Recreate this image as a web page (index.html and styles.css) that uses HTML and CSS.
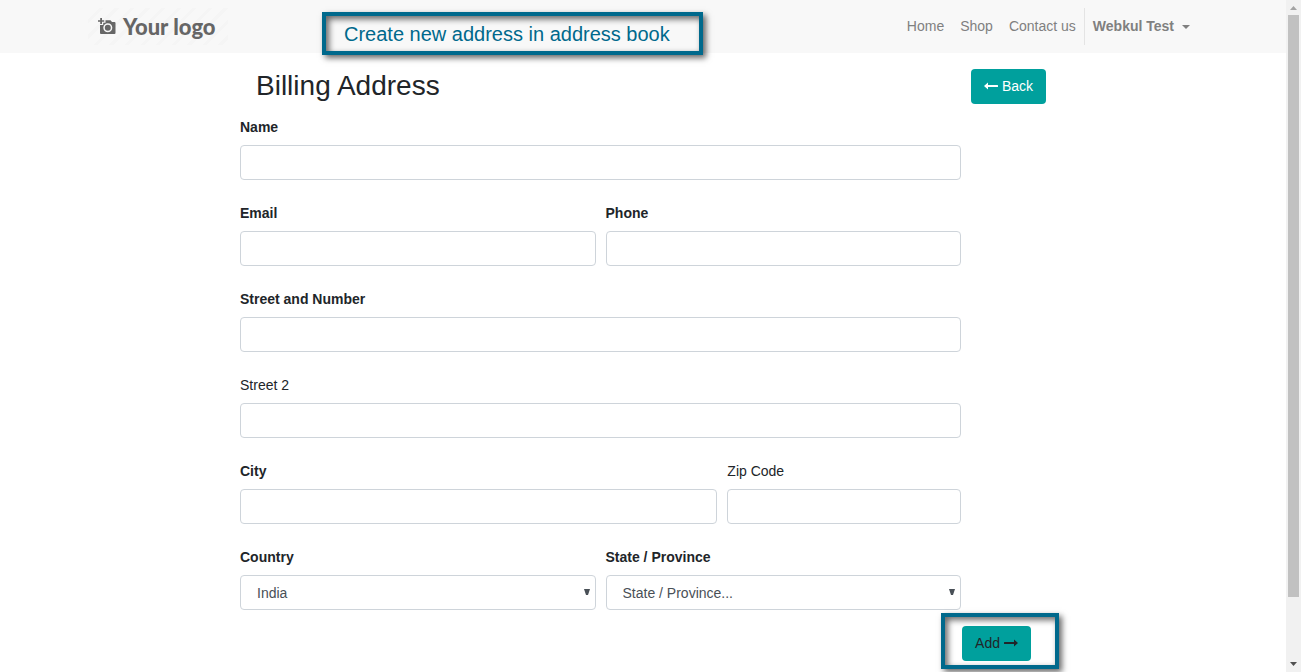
FILE: index.html
```html
<!DOCTYPE html>
<html lang="en">
<head>
<meta charset="utf-8">
<meta name="viewport" content="width=device-width, initial-scale=1">
<title>Billing Address</title>
<link rel="stylesheet" href="styles.css">
</head>
<body>
<div class="window">
  <div class="page">
    <header class="topbar">
      <div class="container">
        <a class="logo" href="#">
          <svg class="logo-icon" viewBox="0 0 18 18" aria-hidden="true">
            <path fill="#666" d="M2.200 0h1.800v2.200h2.200v1.600H4v2.200H2.200V3.800H0V2.200h2.200z"/>
            <path fill="#666" fill-rule="evenodd" d="M7.500 2.200h5l1.500 1.800h2.500q1 0 1 1V15q0 1-1 1H3q-1 0-1-1V7h3.200V4.800h2.300zM9.800 5.300a4.500 4.500 0 1 0 0 9a4.500 4.500 0 0 0 0-9zM9.800 6.800a3 3 0 1 1 0 6a3 3 0 0 1 0-6z"/>
            <circle fill="#666" cx="9.800" cy="9.800" r="2"/>
          </svg>
          <span>Your logo</span>
        </a>
        <nav class="nav">
          <a href="#">Home</a>
          <a href="#">Shop</a>
          <a href="#">Contact us</a>
          <button class="user" type="button">Webkul Test<span class="caret"></span></button>
        </nav>
      </div>
      <div class="callout callout-title">Create new address in address book</div>
    </header>
    <main class="content">
      <div class="heading">
        <h1>Billing Address</h1>
        <a class="btn btn-back" href="#">
          <svg class="arrow" viewBox="0 0 14 9" aria-hidden="true"><path fill="currentColor" d="M0 4 4 .5V3h9.500q.5 0 .5.500v1q0 .5-.5.500H4v2.500z"/></svg>
          Back
        </a>
      </div>
      <form class="form">
        <div class="field span-12"><label class="required" for="name">Name</label><input id="name" type="text"></div>
        <div class="field span-6"><label class="required" for="email">Email</label><input id="email" type="email"></div>
        <div class="field span-6"><label class="required" for="phone">Phone</label><input id="phone" type="tel"></div>
        <div class="field span-12"><label class="required" for="street">Street and Number</label><input id="street" type="text"></div>
        <div class="field span-12"><label for="street2">Street 2</label><input id="street2" type="text"></div>
        <div class="field span-8"><label class="required" for="city">City</label><input id="city" type="text"></div>
        <div class="field span-4"><label for="zip">Zip Code</label><input id="zip" type="text"></div>
        <div class="field span-6">
          <label class="required" for="country">Country</label>
          <div class="select">
            <select id="country"><option>India</option></select>
            <svg class="select-arrow" viewBox="0 0 6 6" aria-hidden="true"><path fill="#495057" d="M0 0h6L4 6H2z"/></svg>
          </div>
        </div>
        <div class="field span-6">
          <label class="required" for="state">State / Province</label>
          <div class="select">
            <select id="state"><option>State / Province...</option></select>
            <svg class="select-arrow" viewBox="0 0 6 6" aria-hidden="true"><path fill="#495057" d="M0 0h6L4 6H2z"/></svg>
          </div>
        </div>
      </form>
      <div class="actions">
        <div class="add-wrap">
          <button class="btn btn-add" type="button">
            Add
            <svg class="arrow" viewBox="0 0 14 9" aria-hidden="true"><path fill="currentColor" d="M14 4 10 .5V3H.5q-.5 0-.5.500v1q0 .5.500.500H10v2.500z"/></svg>
          </button>
          <div class="callout callout-add"></div>
        </div>
      </div>
    </main>
  </div>
  <div class="scrollbar" aria-hidden="true">
    <svg class="scroll-arrow" viewBox="0 0 15 15"><path fill="#a3a3a3" d="M4 10h7L7.500 6z"/></svg>
    <div class="track"><div class="thumb"></div></div>
    <svg class="scroll-arrow" viewBox="0 0 15 15"><path fill="#505050" d="M4 5h7L7.500 9z"/></svg>
  </div>
</div>
</body>
</html>
```
FILE: styles.css
```css
* {
  box-sizing: border-box;
}

body {
  margin: 0;
  background: #fff;
  color: #212529;
  font: 14px/21px "Liberation Sans", Arial, sans-serif;
}

a {
  color: inherit;
  text-decoration: none;
}

.window {
  display: grid;
  grid-template-columns: 1fr 15px;
  height: 100vh;
  overflow: hidden;
}

.page {
  min-width: 0;
}

.topbar {
  position: relative;
  padding: 8px 0;
  background: #f8f8f8;
}

.container {
  display: flex;
  align-items: center;
  justify-content: space-between;
  max-width: 1140px;
  margin: 0 auto;
  padding: 0 15px;
}

.logo {
  display: flex;
  align-items: center;
  gap: 7px;
  height: 37px;
  padding: 0 12px 0 10px;
  background: repeating-linear-gradient(135deg, #f8f8f8 0 8px, #f5f5f5 8px 11px);
  color: #666;
  font: 900 22px/35px Lato, sans-serif;
}

.logo-icon {
  width: 18px;
  height: 18px;
}

.nav {
  display: flex;
  align-items: center;
  color: #808080;
}

.nav a {
  padding: 8px;
}

.user {
  display: flex;
  align-items: center;
  gap: 8px;
  padding: 8px;
  border: 0;
  border-left: 1px solid #e4e4e4;
  background: none;
  color: inherit;
  font: inherit;
  font-weight: bold;
}

.caret {
  border: 4px solid transparent;
  border-top-color: currentColor;
  border-bottom: 0;
}

.content {
  max-width: 806px;
  margin: 0 auto;
  padding-top: 16px;
}

.heading {
  display: flex;
  align-items: flex-start;
  justify-content: space-between;
  margin-bottom: 6px;
  padding-left: 16px;
}

h1 {
  margin: 0;
  font-size: 28px;
  font-weight: normal;
  line-height: 34px;
}

.btn {
  display: flex;
  align-items: center;
  gap: 4px;
  height: 35px;
  padding: 0 13px;
  border: 0;
  border-radius: 4px;
  background: #00a09d;
  font: inherit;
}

.btn-back {
  color: #fff;
}

.btn-add {
  color: #212529;
}

.arrow {
  width: 14px;
  height: 9px;
}

.form {
  display: grid;
  grid-template-columns: repeat(12, 1fr);
  gap: 16px 10px;
  max-width: 721px;
}

.span-12 { grid-column: span 12; }
.span-8 { grid-column: span 8; }
.span-6 { grid-column: span 6; }
.span-4 { grid-column: span 4; }

.field label {
  display: block;
  padding: 7px 0;
}

.field .required {
  font-weight: bold;
}

.field input,
.field select {
  display: block;
  width: 100%;
  height: 35px;
  padding: 0 12px;
  border: 1px solid #ced4da;
  border-radius: 4px;
  background: #fff;
  color: #495057;
  font: inherit;
}

.field select {
  padding: 2px 16px 0;
  appearance: none;
}

.select {
  position: relative;
}

.select-arrow {
  position: absolute;
  top: 14px;
  right: 6px;
  width: 6px;
  height: 6px;
  pointer-events: none;
}

.actions {
  display: flex;
  justify-content: flex-end;
  padding: 16px 15px 0 0;
}

.add-wrap {
  position: relative;
}

.callout {
  position: absolute;
  border: 4px solid #00698c;
  box-shadow: 3px 3px 6px rgba(0, 0, 0, .6), inset 3px 3px 6px rgba(0, 0, 0, .6);
  pointer-events: none;
}

.callout-title {
  top: 12px;
  left: 322px;
  padding: 2px 29px 0 18px;
  color: #00698c;
  font-size: 20px;
  line-height: 33px;
}

.callout-add {
  inset: -13px -28px -8px -21px;
}

.scrollbar {
  display: flex;
  flex-direction: column;
  background: #f1f1f1;
}

.scroll-arrow {
  width: 15px;
  height: 15px;
}

.track {
  flex: 1;
  padding: 0 2px;
}

.thumb {
  height: calc(100% - 60px);
  background: #c1c1c1;
}
```
